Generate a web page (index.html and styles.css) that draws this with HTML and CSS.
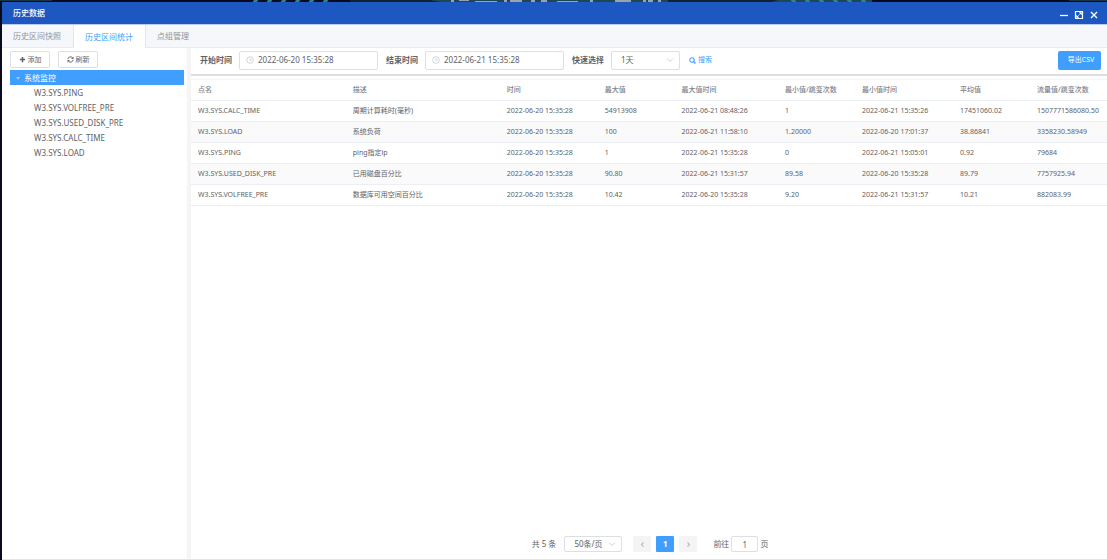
FILE: index.html
```
<!DOCTYPE html>
<html lang="zh-CN">
<head>
<meta charset="utf-8">
<title>历史数据</title>
<link rel="stylesheet" href="styles.css">
</head>
<body>
<svg class="backdrop" viewBox="0 0 1107 2" preserveAspectRatio="none" aria-hidden="true">
  <path fill="#1b3442" d="M0 0h52v1H0zM1069 0h38v1h-38z"/>
  <path fill="#1f4751" d="M350 0h522v2H350z"/>
  <path fill="#0e2230" d="M350 0h80l10 2h-90zM668 0h110l-6 2H668z"/>
  <path stroke="#2f8290" stroke-width="5" d="M254 0l3 2M268 0l3 2M282 0l3 2M296 0l3 2M310 0l3 2M324 0l3 2M795 0l-3 2M809 0l-3 2M823 0l-3 2M837 0l-3 2M851 0l-3 2M865 0l-3 2"/>
  <path fill="#9aa3a8" d="M451 0h3v2h-3zM459 0h10v1h-10zM475 1h22v1h-22zM504 0h3v2h-3zM510 0h12v2h-12zM531 0h4v2h-4zM541 0h6v2h-6zM557 1h21v1h-21zM590 0h3v2h-3zM615 0h16v2h-16zM643 0h3v2h-3zM648 0h5v2h-5zM658 0h3v2h-3z"/>
</svg>
<div class="window">
  <header class="titlebar">
    <h1 class="title">历史数据</h1>
    <div class="window-actions">
      <button class="window-button" aria-label="最小化"><svg viewBox="0 0 10 10"><path d="M1 5.5h8" stroke="currentColor" stroke-width="1.3"/></svg></button>
      <button class="window-button" aria-label="最大化"><svg viewBox="0 0 10 10" fill="none" stroke="currentColor"><path d="M1.5 1.5h7v7h-7z" stroke-width="1.2"/><path d="M5.2 2.7h2.1v2.1M7.2 2.8L5.4 4.6M4.8 7.3H2.7V5.2M2.8 7.2l1.8-1.8"/></svg></button>
      <button class="window-button" aria-label="关闭"><svg viewBox="0 0 10 10"><path d="M2 2l6 6M8 2L2 8" stroke="currentColor" stroke-width="1.4"/></svg></button>
    </div>
  </header>
  <nav class="tabs">
    <button class="tab">历史区间快照</button>
    <button class="tab tab-active">历史区间统计</button>
    <button class="tab">点组管理</button>
  </nav>
  <div class="body">
    <aside class="sidebar">
      <div class="sidebar-actions">
        <button class="small-button"><svg class="icon" viewBox="0 0 8 8"><path d="M4 1v6M1 4h6" stroke="currentColor" stroke-width="1.8"/></svg>添加</button>
        <button class="small-button"><svg class="icon" viewBox="0 0 8 8" fill="none"><path d="M1 3.6A3 3 0 0 1 6.4 2.2M7 4.4A3 3 0 0 1 1.6 5.8" stroke="currentColor" stroke-width="1.1"/><path d="M7.4.6v2.8H4.6zM.6 7.4V4.6h2.8z" fill="currentColor"/></svg>刷新</button>
      </div>
      <div class="tree">
        <button class="tree-group" aria-expanded="true"><svg class="caret" viewBox="0 0 6 6"><path d="M1 2h4L3 5z" fill="#a9c4df"/></svg>系统监控</button>
        <ul class="tree-list">
          <li><a href="#ping">W3.SYS.PING</a></li>
          <li><a href="#volfree">W3.SYS.VOLFREE_PRE</a></li>
          <li><a href="#disk">W3.SYS.USED_DISK_PRE</a></li>
          <li><a href="#calc">W3.SYS.CALC_TIME</a></li>
          <li><a href="#load">W3.SYS.LOAD</a></li>
        </ul>
      </div>
    </aside>
    <main class="content">
      <form class="toolbar">
        <label class="label" for="start">开始时间</label>
        <div class="date-field"><svg class="clock" viewBox="0 0 8 8" fill="none" stroke="currentColor" stroke-width=".7"><circle cx="4" cy="4" r="3.3"/><path d="M4 2v2.2h1.8"/></svg><input id="start" type="text" value="2022-06-20 15:35:28"></div>
        <label class="label" for="end">结束时间</label>
        <div class="date-field"><svg class="clock" viewBox="0 0 8 8" fill="none" stroke="currentColor" stroke-width=".7"><circle cx="4" cy="4" r="3.3"/><path d="M4 2v2.2h1.8"/></svg><input id="end" type="text" value="2022-06-21 15:35:28"></div>
        <label class="label" for="range">快速选择</label>
        <div class="select-field range-field"><select id="range"><option>1天</option></select><svg class="chevron" viewBox="0 0 8 8" fill="none" stroke="currentColor" stroke-width=".8"><path d="M1 2.5l3 3 3-3"/></svg></div>
        <button class="search" type="button"><svg class="icon" viewBox="0 0 8 8" fill="none" stroke="currentColor"><circle cx="3.4" cy="3.4" r="2.5" stroke-width="1.2"/><path d="M5.2 5.2l2.2 2.2" stroke-width="1.5"/></svg>搜索</button>
        <button class="export" type="button">导出CSV</button>
      </form>
      <div class="table-area">
        <table class="table">
          <colgroup><col class="col-name"><col class="col-desc"><col class="col-time"><col class="col-value"><col class="col-max-time"><col class="col-value"><col class="col-time"><col class="col-value"><col></colgroup>
          <thead><tr><th>点名</th><th>描述</th><th>时间</th><th>最大值</th><th>最大值时间</th><th>最小值/跳变次数</th><th>最小值时间</th><th>平均值</th><th>流量值/跳变次数</th></tr></thead>
          <tbody>
            <tr><td>W3.SYS.CALC_TIME</td><td>周期计算耗时(毫秒)</td><td>2022-06-20 15:35:28</td><td>54913908</td><td>2022-06-21 08:48:26</td><td>1</td><td>2022-06-21 15:35:26</td><td>17451060.02</td><td>1507771586080.50</td></tr>
            <tr><td>W3.SYS.LOAD</td><td>系统负荷</td><td>2022-06-20 15:35:28</td><td>100</td><td>2022-06-21 11:58:10</td><td>1.20000</td><td>2022-06-20 17:01:37</td><td>38.86841</td><td>3358230.58949</td></tr>
            <tr><td>W3.SYS.PING</td><td>ping指定ip</td><td>2022-06-20 15:35:28</td><td>1</td><td>2022-06-21 15:35:28</td><td>0</td><td>2022-06-21 15:05:01</td><td>0.92</td><td>79684</td></tr>
            <tr><td>W3.SYS.USED_DISK_PRE</td><td>已用磁盘百分比</td><td>2022-06-20 15:35:28</td><td>90.80</td><td>2022-06-21 15:31:57</td><td>89.58</td><td>2022-06-20 15:35:28</td><td>89.79</td><td>7757925.94</td></tr>
            <tr><td>W3.SYS.VOLFREE_PRE</td><td>数据库可用空间百分比</td><td>2022-06-20 15:35:28</td><td>10.42</td><td>2022-06-20 15:35:28</td><td>9.20</td><td>2022-06-21 15:31:57</td><td>10.21</td><td>882083.99</td></tr>
          </tbody>
        </table>
      </div>
      <footer class="pagination">
        <span>共 5 条</span>
        <div class="select-field size-field"><select aria-label="每页条数"><option>50条/页</option></select><svg class="chevron" viewBox="0 0 8 8" fill="none" stroke="currentColor" stroke-width=".8"><path d="M1 2.5l3 3 3-3"/></svg></div>
        <div class="pager">
          <button class="page" aria-label="上一页"><svg class="icon" viewBox="0 0 8 8" fill="none" stroke="currentColor" stroke-width="1.3"><path d="M5.2 1.5L2.8 4l2.4 2.5"/></svg></button>
          <button class="page page-active">1</button>
          <button class="page" aria-label="下一页"><svg class="icon" viewBox="0 0 8 8" fill="none" stroke="currentColor" stroke-width="1.3"><path d="M2.8 1.5L5.2 4 2.8 6.5"/></svg></button>
        </div>
        <div class="jump"><label for="page">前往</label><input id="page" type="text" value="1"><span>页</span></div>
      </footer>
    </main>
  </div>
</div>
</body>
</html>
```
FILE: styles.css
```
* { box-sizing: border-box; }

body {
  margin: 0;
  min-height: 100vh;
  display: flex;
  flex-direction: column;
  background: #080b1b;
  color: #606266;
  font: 8px/12px "Noto Sans", "Noto Sans CJK SC", sans-serif;
}

button, input, select { font: inherit; color: inherit; margin: 0; }
button { border: 0; padding: 0; background: none; cursor: pointer; }
svg { display: block; flex: none; }

.backdrop { width: 100%; height: 2px; }

.window {
  flex: 1;
  display: flex;
  flex-direction: column;
  margin-left: 2px;
  background: #fff;
  border-bottom: 1px solid #e4e4e4;
}

.titlebar {
  display: flex;
  align-items: center;
  justify-content: space-between;
  height: 23px;
  padding: 0 8px 0 11px;
  background: #1d58c2;
  border-bottom: 1px solid #bccbea;
  color: #fff;
}
.title { margin: 0; font-size: 8px; font-weight: 500; }
.window-actions { display: flex; gap: 5px; padding-top: 3px; }
.window-button svg { width: 10px; height: 10px; }

.tabs {
  display: flex;
  height: 23px;
  background: #f5f7fa;
  border-bottom: 1px solid #e8ebf1;
}
.tab { padding: 0 12px 0 11px; color: #909399; }
.tab-active {
  height: 23px;
  background: #fff;
  color: #409eff;
  border: solid #e2e6ed;
  border-width: 0 1px;
}

.body { flex: 1; display: flex; }

.sidebar {
  flex: 0 0 185px;
  padding: 3px 3px 0 8px;
}
.sidebar-actions { display: flex; gap: 8px; margin-bottom: 2px; }
.small-button {
  display: flex;
  align-items: center;
  justify-content: center;
  gap: 2px;
  width: 40px;
  height: 17px;
  border: 1px solid #dcdfe6;
  border-radius: 2px;
  font-size: 7px;
}
.icon { width: 7px; height: 7px; }

.tree-group {
  display: flex;
  align-items: center;
  gap: 3px;
  width: 100%;
  height: 15px;
  padding-left: 5px;
  background: #409eff;
  color: #fff;
}
.caret { width: 6px; height: 6px; }
.tree-list {
  margin: 0;
  padding: 0 0 0 24px;
  list-style: none;
  font-size: 8px;
  line-height: 15px;
}
.tree-list a { color: inherit; text-decoration: none; }

.content {
  flex: 1;
  min-width: 0;
  display: flex;
  flex-direction: column;
  border-left: 4px solid #f5f5f5;
}

.toolbar {
  display: flex;
  align-items: center;
  height: 28px;
  padding: 0 6px 2px 9px;
  border-bottom: 2px solid #dedede;
}
.label { margin-right: 7px; font-weight: 600; }
.date-field {
  display: flex;
  align-items: center;
  gap: 4px;
  width: 139px;
  height: 19px;
  margin-right: 8px;
  padding: 0 6px;
  border: 1px solid #dcdfe6;
  border-radius: 2px;
}
.date-field input { flex: 1; min-width: 0; border: 0; padding: 0; background: none; }
.clock { width: 8px; height: 8px; color: #c0c4cc; }

.select-field {
  display: flex;
  align-items: center;
  padding-right: 5px;
  border: 1px solid #dcdfe6;
  border-radius: 2px;
}
.select-field select {
  flex: 1;
  min-width: 0;
  height: 100%;
  padding: 0 0 0 9px;
  border: 0;
  background: none;
  appearance: none;
}
.chevron { width: 8px; height: 8px; color: #c0c4cc; }
.range-field { width: 69px; height: 19px; margin-right: 9px; }

.search { display: flex; align-items: center; gap: 2px; color: #409eff; font-size: 7px; }
.export {
  width: 43px;
  height: 19px;
  margin-left: auto;
  padding-left: 3px;
  border-radius: 2px;
  background: #409eff;
  color: #fff;
  font-size: 7px;
}

.table-area { flex: 1; padding-top: 3px; }
.table {
  width: 100%;
  table-layout: fixed;
  border-collapse: separate;
  border-spacing: 0;
  border-top: 1px solid #f4f5f8;
  font-size: 7px;
  line-height: 10px;
}
.table th, .table td {
  height: 21px;
  padding: 0 0 0 7px;
  border-bottom: 1px solid #ebeef5;
  text-align: left;
  white-space: nowrap;
  font-weight: 400;
}
.table th { color: #7f838b; font-weight: 500; }
.table tbody tr:nth-child(even) { background: #fafafa; }
.col-name { width: 16.9%; }
.col-desc { width: 16.8%; }
.col-time { width: 10.7%; }
.col-value { width: 8.4%; }
.col-max-time { width: 11.3%; }

.pagination {
  display: flex;
  align-items: center;
  justify-content: center;
  height: 30px;
  padding-left: 2px;
}
.size-field { width: 58px; height: 16px; margin: 0 11px 0 8px; }
.pager { display: flex; gap: 5px; }
.page {
  display: flex;
  align-items: center;
  justify-content: center;
  width: 18px;
  height: 16px;
  border-radius: 1px;
  background: #f4f4f5;
  color: #b4b9c2;
}
.page-active { background: #409eff; color: #fff; font-weight: 700; }
.jump { display: flex; align-items: center; gap: 2px; margin-left: 16px; }
.jump input {
  width: 27px;
  height: 16px;
  padding: 0;
  border: 1px solid #dcdfe6;
  border-radius: 2px;
  text-align: center;
}
```
